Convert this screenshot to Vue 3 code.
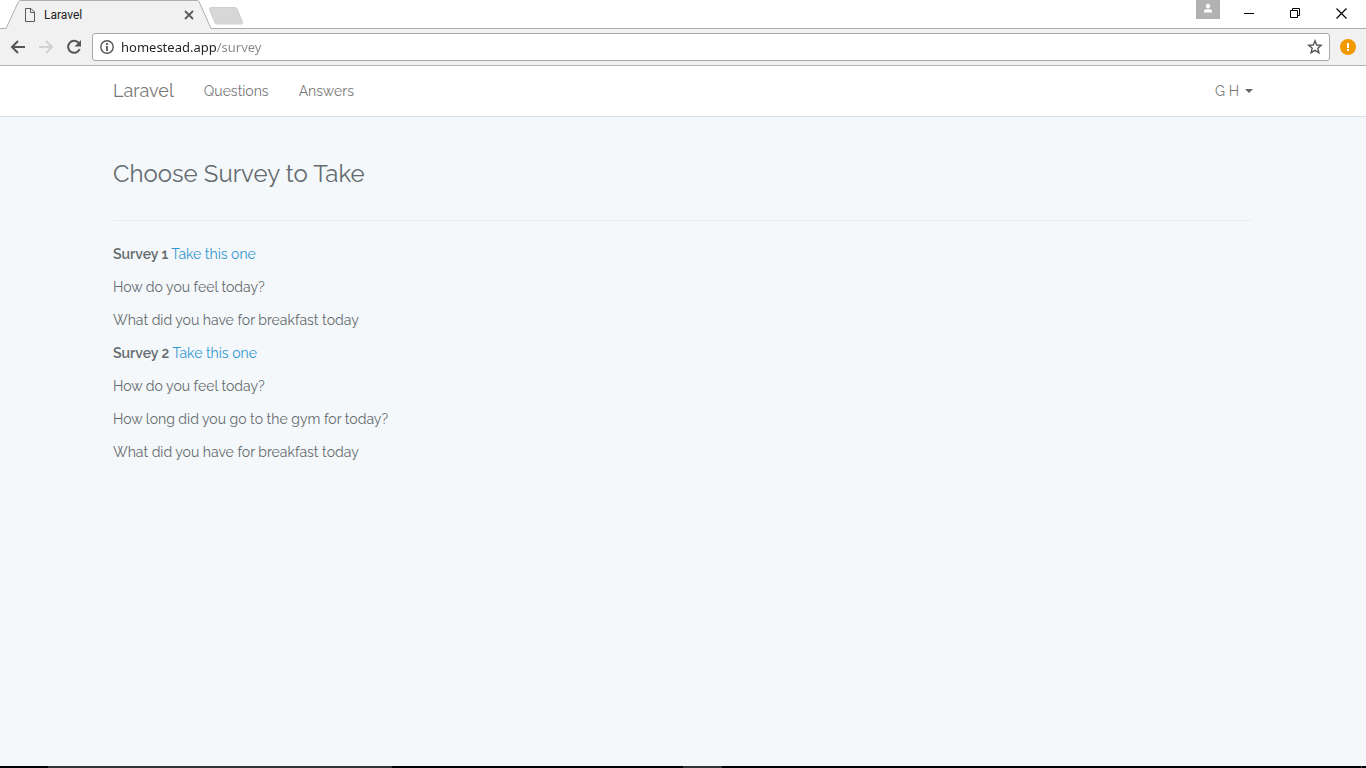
<script setup>
import { ref } from 'vue'

const address = ref('homestead.app/survey')

const surveys = [
  { id: 1, questions: ['How do you feel today?', 'What did you have for breakfast today'] },
  {
    id: 2,
    questions: [
      'How do you feel today?',
      'How long did you go to the gym for today?',
      'What did you have for breakfast today',
    ],
  },
]
</script>

<template>
  <div class="window">
    <div class="tabstrip">
      <div class="tab">
        <svg class="tab-shape" viewBox="0 0 206 29" preserveAspectRatio="none" aria-hidden="true">
          <path d="M0 28.5 L12.5 1.5 Q13 .5 14.5 .5 H191 Q192.500 .5 193 1.500 L205 28.500 V29 H0 Z" fill="#f1f1f1" />
          <path d="M0 28.500 L12.500 1.500 Q13 .5 14.500 .5 H191 Q192.500 .5 193 1.500 L205 28.500" fill="none" stroke="#aeaeae" />
        </svg>
        <svg class="page-icon" width="12" height="14" viewBox="0 0 12 14" aria-hidden="true">
          <path d="M1.500 .5 H7 L10.500 4 V13.500 H1.500 Z M6.500 .5 V4.500 H10.500" fill="none" stroke="#5a5a5a" />
        </svg>
        <span class="tab-title">Laravel</span>
        <button class="bare tab-close" aria-label="Close tab">
          <svg width="10" height="10" viewBox="0 0 10 10"><path d="M1 1 L9 9 M9 1 L1 9" stroke="#5a5a5a" stroke-width="1.800" /></svg>
        </button>
      </div>
      <button class="bare new-tab" aria-label="New tab">
        <svg width="36" height="19" viewBox="0 0 36 19">
          <path d="M3 1.500 H27 Q28.500 1.500 29.200 3 L34.500 16 Q35 18 33 18 H9 Q7.500 18 6.800 16.500 L1.500 3.500 Q1 1.500 3 1.500Z" fill="#d7d7d7" stroke="#d0d0d0" />
        </svg>
      </button>
      <div class="window-controls">
        <button class="bare profile" aria-label="Profile">
          <svg width="24" height="19" viewBox="0 0 24 19">
            <circle cx="12" cy="6" r="2.200" fill="#fff" />
            <path d="M8 12.500 V11 Q8 9 12 9 Q16 9 16 11 V12.500Z" fill="#fff" />
          </svg>
        </button>
        <button class="bare control" aria-label="Minimize">
          <svg width="11" height="11" viewBox="0 0 11 11"><path d="M0 5.500 H10" stroke="#000" /></svg>
        </button>
        <button class="bare control" aria-label="Restore">
          <svg width="11" height="11" viewBox="0 0 11 11"><path d="M.5 2.500 H7.500 V9.500 H.5Z M2.500 2.500 V.5 H9.500 V7.500 H7.500" fill="none" stroke="#000" /></svg>
        </button>
        <button class="bare control" aria-label="Close">
          <svg width="11" height="11" viewBox="0 0 11 11"><path d="M.5 .5 L10.500 10.500 M10.500 .5 L.5 10.500" stroke="#000" stroke-width="1.200" /></svg>
        </button>
      </div>
    </div>

    <div class="toolbar">
      <button class="bare tool" aria-label="Back">
        <svg width="16" height="16" viewBox="0 0 16 16"><path d="M15 8 H2 M8 2 L2 8 L8 14" fill="none" stroke="#555" stroke-width="2" /></svg>
      </button>
      <button class="bare tool" aria-label="Forward" disabled>
        <svg width="16" height="16" viewBox="0 0 16 16"><path d="M1 8 H14 M8 2 L14 8 L8 14" fill="none" stroke="#d0d0d0" stroke-width="2" /></svg>
      </button>
      <button class="bare tool" aria-label="Reload">
        <svg width="16" height="16" viewBox="0 0 16 16">
          <path d="M12.800 4 A6 6 0 1 0 13.700 10" fill="none" stroke="#555" stroke-width="2" />
          <path d="M15 1 V7.500 H8.500Z" fill="#555" />
        </svg>
      </button>
      <div class="omnibox">
        <button class="bare info" aria-label="Site information">
          <svg width="14" height="14" viewBox="0 0 14 14">
            <circle cx="7" cy="7" r="6.200" fill="none" stroke="#555" stroke-width="1.400" />
            <path d="M7 3 V5 M7 6 V11" stroke="#555" stroke-width="1.800" />
          </svg>
        </button>
        <input v-model="address" class="address" type="text" aria-label="Address" spellcheck="false" />
        <button class="bare" aria-label="Bookmark this page">
          <svg width="16" height="16" viewBox="0 0 16 16">
            <path d="M8 1.800 L9.700 6 L14.200 6.300 L10.800 9.200 L11.900 13.700 L8 11.300 L4.100 13.700 L5.200 9.200 L1.800 6.300 L6.300 6Z" fill="none" stroke="#555" stroke-width="1.400" />
          </svg>
        </button>
      </div>
      <button class="bare warning" aria-label="Update available">
        <svg width="16" height="16" viewBox="0 0 16 16">
          <circle cx="8" cy="8" r="8" fill="#f29900" />
          <path d="M8 4 V9 M8 10 V12" stroke="#fff" stroke-width="2" />
        </svg>
      </button>
    </div>

    <div class="page">
      <nav class="navbar">
        <div class="container nav-row">
          <a class="brand" href="#">Laravel</a>
          <a class="nav-link" href="#">Questions</a>
          <a class="nav-link" href="#">Answers</a>
          <button class="bare user">G H <span class="caret"></span></button>
        </div>
      </nav>
      <main class="container content">
        <h1>Choose Survey to Take</h1>
        <hr />
        <section v-for="survey in surveys" :key="survey.id">
          <p><strong>Survey {{ survey.id }}</strong> <a href="#">Take this one</a></p>
          <p v-for="question in survey.questions" :key="question">{{ question }}</p>
        </section>
      </main>
    </div>

    <div class="taskbar">
      <span class="task-pad"></span>
      <span class="task-search"></span>
      <span class="task-gap"></span>
      <span class="task-app"></span>
      <span class="task-rest"></span>
    </div>
  </div>
</template>

<style>
body {
  margin: 0;
}
</style>

<style scoped>
.window {
  display: flex;
  flex-direction: column;
  min-height: 100vh;
  background: #f5f8fa;
}
.window * {
  box-sizing: border-box;
}
.bare {
  display: flex;
  align-items: center;
  justify-content: center;
  padding: 0;
  border: 0;
  background: none;
  font: inherit;
  color: inherit;
}
svg {
  display: block;
  flex: none;
}

.tabstrip {
  display: flex;
  height: 29px;
  padding-left: 6px;
  background: linear-gradient(#aeaeae, #aeaeae) bottom / 100% 1px no-repeat #fff;
  font: 12px Roboto, sans-serif;
  color: #222;
}
.tab {
  position: relative;
  display: flex;
  align-items: center;
  width: 206px;
  padding: 1px 18px 0 18px;
}
.tab > * {
  position: relative;
}
.tab .tab-shape {
  position: absolute;
  inset: 0;
  width: 100%;
  height: 100%;
}
.tab-title {
  flex: 1;
  margin-left: 8px;
}
.new-tab {
  align-self: flex-start;
  margin: 6px 0 0 -4px;
}
.window-controls {
  display: flex;
  margin: 0 2px 0 auto;
}
.profile {
  align-self: flex-start;
  margin-right: 6px;
  background: #b2b2b2;
}
.control {
  width: 46px;
  height: 26px;
}

.toolbar {
  display: flex;
  align-items: center;
  height: 37px;
  padding: 0 10px;
  border-bottom: 1px solid #b5b5b5;
  background: #f1f1f1;
}
.tool {
  width: 16px;
  margin-right: 12px;
}
.omnibox {
  display: flex;
  flex: 1;
  align-items: center;
  height: 28px;
  margin-left: -2px;
  padding: 0 6px 0 7px;
  border: 1px solid #a9a9a9;
  border-radius: 3px;
  background: #fff;
}
.address {
  flex: 1;
  min-width: 0;
  margin-left: 7px;
  padding: 0;
  border: 0;
  outline: 0;
  font: 13px "Noto Sans", "Open Sans", sans-serif;
  color: #222;
  background: linear-gradient(90deg, #222 95px, #888 95px);
  background-clip: text;
  -webkit-text-fill-color: transparent;
}
.warning {
  margin-left: 10px;
}

.page {
  flex: 1;
  font: 400 14px/22px Raleway, Lato, sans-serif;
  color: #636b6f;
}
.container {
  width: 100%;
  max-width: 1170px;
  margin: 0 auto;
  padding: 0 15px;
}
.navbar {
  border-bottom: 1px solid #d3e0e9;
  background: #fff;
}
.nav-row {
  display: flex;
  align-items: center;
  gap: 30px;
  height: 50px;
  color: #777;
}
.brand,
.nav-link {
  color: #777;
  text-decoration: none;
}
.brand {
  font-size: 18px;
}
.user {
  margin-left: auto;
}
.caret {
  margin-left: 6px;
  border: 4px solid transparent;
  border-top-color: #666;
  border-bottom: 0;
}
.content {
  padding-top: 44px;
}
h1 {
  margin: 0 0 33px;
  font-size: 24px;
  font-weight: 400;
  line-height: 26px;
}
hr {
  margin: 0 0 22px;
  border: 0;
  border-top: 1px solid #e9eef0;
}
p {
  margin: 0 0 11px;
}
strong {
  font-weight: 600;
}
p a {
  color: #3097d1;
  text-decoration: none;
}

.taskbar {
  display: flex;
  height: 2px;
  background: #000;
}
.task-pad {
  width: 48px;
}
.task-search {
  width: 344px;
  background: #333;
}
.task-gap {
  width: 291px;
}
.task-app {
  width: 39px;
  background: #333;
}
.task-rest {
  flex: 1;
  margin-right: 4px;
  border-right: 1px solid #444;
}
</style>
